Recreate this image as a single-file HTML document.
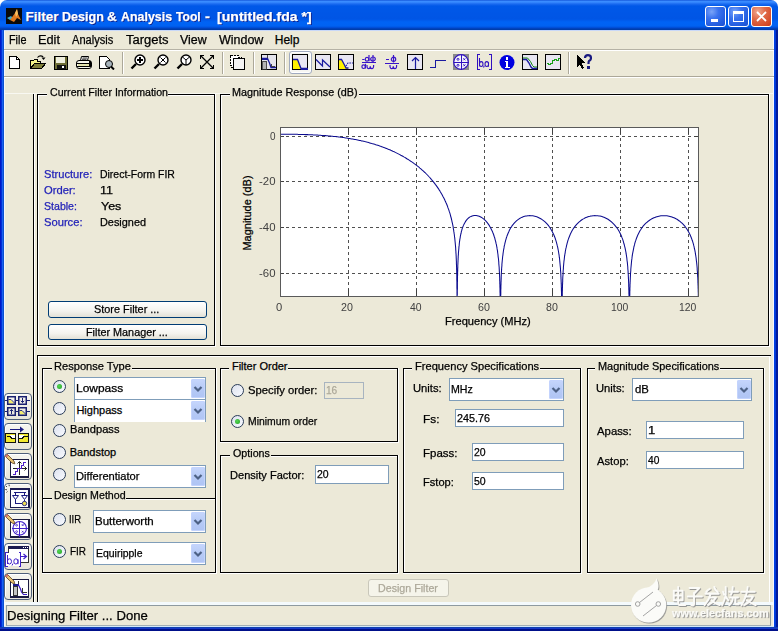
<!DOCTYPE html><html><head><meta charset="utf-8"><style>
html,body{margin:0;padding:0;width:778px;height:631px;overflow:hidden;background:#ECE9D8;position:relative}
body{font-family:"Liberation Sans",sans-serif}
.t{position:absolute;white-space:pre;-webkit-text-stroke:0.25px currentColor}
div{box-sizing:border-box}
</style></head><body>
<div style="position:absolute;left:0px;top:0px;width:778px;height:31px;background:#fff"></div>
<div style="position:absolute;left:0;top:0;width:778px;height:31px;border-radius:7px 7px 0 0;background:linear-gradient(to bottom,#0A48D0 0px,#3A8CFF 1px,#3A8CFF 2px,#1A6AF0 4px,#0058E8 6px,#0055E5 19px,#0063F5 22px,#0062F2 26px,#0048D0 28px,#003DAA 29px,#003DAA 30px,#C8D8F8 30px,#C8D8F8 31px)"></div>
<div style="position:absolute;left:0px;top:30px;width:1px;height:601px;background:#0018C8"></div>
<div style="position:absolute;left:1px;top:30px;width:1px;height:601px;background:#0030D8"></div>
<div style="position:absolute;left:2px;top:30px;width:1px;height:601px;background:#1A60F0"></div>
<div style="position:absolute;left:3px;top:30px;width:1px;height:601px;background:#0A50D0"></div>
<div style="position:absolute;left:4px;top:31px;width:1px;height:596px;background:#F0F4FF"></div>
<div style="position:absolute;left:773px;top:31px;width:1px;height:596px;background:#F4F6FF"></div>
<div style="position:absolute;left:774px;top:30px;width:1px;height:601px;background:#0040E0"></div>
<div style="position:absolute;left:775px;top:30px;width:1px;height:601px;background:#0038D8"></div>
<div style="position:absolute;left:776px;top:30px;width:2px;height:601px;background:#001A9A"></div>
<div style="position:absolute;left:0px;top:627px;width:778px;height:1px;background:#1040B0"></div>
<div style="position:absolute;left:0px;top:628px;width:778px;height:1px;background:#1838C8"></div>
<div style="position:absolute;left:0px;top:629px;width:778px;height:2px;background:#00108A"></div>
<div class="t" style="left:25.62px;top:10.46px;font-size:13.4px;line-height:13.4px;color:#fff;font-weight:bold;text-shadow:1px 1px 0 #0A1E8A">Filter</div>
<div class="t" style="left:61.78px;top:10.46px;font-size:13.4px;line-height:13.4px;color:#fff;font-weight:bold;transform:scaleX(0.9379);transform-origin:0 0;text-shadow:1px 1px 0 #0A1E8A">Design</div>
<div class="t" style="left:107.04px;top:10.46px;font-size:13.4px;line-height:13.4px;color:#fff;font-weight:bold;transform:scaleX(1.0075);transform-origin:0 0;text-shadow:1px 1px 0 #0A1E8A">&amp;</div>
<div class="t" style="left:120.71px;top:10.46px;font-size:13.4px;line-height:13.4px;color:#fff;font-weight:bold;transform:scaleX(0.9264);transform-origin:0 0;text-shadow:1px 1px 0 #0A1E8A">Analysis</div>
<div class="t" style="left:176.28px;top:10.46px;font-size:13.4px;line-height:13.4px;color:#fff;font-weight:bold;transform:scaleX(0.9036);transform-origin:0 0;text-shadow:1px 1px 0 #0A1E8A">Tool</div>
<div class="t" style="left:205.11px;top:10.46px;font-size:13.4px;line-height:13.4px;color:#fff;font-weight:bold;transform:scaleX(1.1048);transform-origin:0 0;text-shadow:1px 1px 0 #0A1E8A">-</div>
<div class="t" style="left:217.22px;top:10.46px;font-size:13.4px;line-height:13.4px;color:#fff;font-weight:bold;transform:scaleX(1.0522);transform-origin:0 0;text-shadow:1px 1px 0 #0A1E8A">[untitled.fda *]</div>
<div class="t" style="left:9.29px;top:33.84px;font-size:12px;line-height:12px;color:#000;transform:scaleX(0.9019);transform-origin:0 0;">File</div>
<div class="t" style="left:37.81px;top:33.84px;font-size:12px;line-height:12px;color:#000;transform:scaleX(1.0642);transform-origin:0 0;">Edit</div>
<div class="t" style="left:72.10px;top:33.84px;font-size:12px;line-height:12px;color:#000;transform:scaleX(0.9221);transform-origin:0 0;">Analysis</div>
<div class="t" style="left:125.55px;top:33.84px;font-size:12px;line-height:12px;color:#000;transform:scaleX(1.0831);transform-origin:0 0;">Targets</div>
<div class="t" style="left:180.06px;top:33.84px;font-size:12px;line-height:12px;color:#000;transform:scaleX(1.0313);transform-origin:0 0;">View</div>
<div class="t" style="left:219.21px;top:33.84px;font-size:12px;line-height:12px;color:#000;transform:scaleX(1.0394);transform-origin:0 0;">Window</div>
<div class="t" style="left:274.79px;top:33.84px;font-size:12px;line-height:12px;color:#000;">Help</div>
<div style="position:absolute;left:4px;top:49px;width:770px;height:1px;background:#B5B2A5"></div>
<div style="position:absolute;left:4px;top:50px;width:770px;height:1px;background:#fff"></div>
<div style="position:absolute;left:4px;top:76px;width:770px;height:1px;background:#ACA899"></div>
<div style="position:absolute;left:4px;top:77px;width:770px;height:1px;background:#fff"></div>
<div style="position:absolute;left:122px;top:52px;width:1px;height:22px;background:#ACA899"></div>
<div style="position:absolute;left:123px;top:52px;width:1px;height:22px;background:#fff"></div>
<div style="position:absolute;left:222px;top:52px;width:1px;height:22px;background:#ACA899"></div>
<div style="position:absolute;left:223px;top:52px;width:1px;height:22px;background:#fff"></div>
<div style="position:absolute;left:253px;top:52px;width:1px;height:22px;background:#ACA899"></div>
<div style="position:absolute;left:254px;top:52px;width:1px;height:22px;background:#fff"></div>
<div style="position:absolute;left:284px;top:52px;width:1px;height:22px;background:#ACA899"></div>
<div style="position:absolute;left:285px;top:52px;width:1px;height:22px;background:#fff"></div>
<div style="position:absolute;left:568px;top:52px;width:1px;height:22px;background:#ACA899"></div>
<div style="position:absolute;left:569px;top:52px;width:1px;height:22px;background:#fff"></div>
<div style="position:absolute;left:33px;top:94px;width:1px;height:509px;background:#000"></div>
<div style="position:absolute;left:34px;top:94px;width:1px;height:509px;background:#fff"></div>
<div style="position:absolute;left:4px;top:93px;width:770px;height:1px;background:#F8F8F2"></div>
<div style="position:absolute;left:37px;top:94px;width:178px;height:1px;background:#000"></div>
<div style="position:absolute;left:37px;top:345px;width:178px;height:1px;background:#000"></div>
<div style="position:absolute;left:37px;top:94px;width:1px;height:252px;background:#000"></div>
<div style="position:absolute;left:214px;top:94px;width:1px;height:252px;background:#000"></div>
<div style="position:absolute;left:38px;top:95px;width:176px;height:1px;background:#fff"></div>
<div style="position:absolute;left:38px;top:95px;width:1px;height:250px;background:#fff"></div>
<div style="position:absolute;left:37px;top:346px;width:179px;height:1px;background:#fff"></div>
<div style="position:absolute;left:215px;top:94px;width:1px;height:253px;background:#fff"></div>
<div style="position:absolute;left:46.7px;top:87px;width:121.8px;height:10px;background:#ECE9D8"></div>
<div class="t" style="left:50.09px;top:87.19px;font-size:11px;line-height:11px;color:#000;transform:scaleX(0.9651);transform-origin:0 0;">Current Filter Information</div>
<div style="position:absolute;left:220px;top:94px;width:549px;height:1px;background:#000"></div>
<div style="position:absolute;left:220px;top:345px;width:549px;height:1px;background:#000"></div>
<div style="position:absolute;left:220px;top:94px;width:1px;height:252px;background:#000"></div>
<div style="position:absolute;left:768px;top:94px;width:1px;height:252px;background:#000"></div>
<div style="position:absolute;left:221px;top:95px;width:547px;height:1px;background:#fff"></div>
<div style="position:absolute;left:221px;top:95px;width:1px;height:250px;background:#fff"></div>
<div style="position:absolute;left:220px;top:346px;width:550px;height:1px;background:#fff"></div>
<div style="position:absolute;left:769px;top:94px;width:1px;height:253px;background:#fff"></div>
<div style="position:absolute;left:229.5px;top:87px;width:129px;height:10px;background:#ECE9D8"></div>
<div class="t" style="left:232.41px;top:86.99px;font-size:11px;line-height:11px;color:#000;transform:scaleX(0.9825);transform-origin:0 0;">Magnitude Response (dB)</div>
<div style="position:absolute;left:37px;top:355px;width:734px;height:1px;background:#000"></div>
<div style="position:absolute;left:38px;top:356px;width:732px;height:1px;background:#fff"></div>
<div style="position:absolute;left:37px;top:355px;width:1px;height:249px;background:#000"></div>
<div style="position:absolute;left:38px;top:356px;width:1px;height:248px;background:#fff"></div>
<div style="position:absolute;left:769px;top:356px;width:1px;height:248px;background:#fff"></div>
<div style="position:absolute;left:42px;top:368px;width:174px;height:1px;background:#000"></div>
<div style="position:absolute;left:42px;top:498px;width:174px;height:1px;background:#000"></div>
<div style="position:absolute;left:42px;top:368px;width:1px;height:131px;background:#000"></div>
<div style="position:absolute;left:215px;top:368px;width:1px;height:131px;background:#000"></div>
<div style="position:absolute;left:43px;top:369px;width:172px;height:1px;background:#fff"></div>
<div style="position:absolute;left:43px;top:369px;width:1px;height:129px;background:#fff"></div>
<div style="position:absolute;left:42px;top:499px;width:175px;height:1px;background:#fff"></div>
<div style="position:absolute;left:216px;top:368px;width:1px;height:132px;background:#fff"></div>
<div style="position:absolute;left:51.5px;top:361px;width:80.2px;height:10px;background:#ECE9D8"></div>
<div class="t" style="left:54.40px;top:361.29px;font-size:11px;line-height:11px;color:#000;transform:scaleX(1.0088);transform-origin:0 0;">Response Type</div>
<div style="position:absolute;left:42px;top:498px;width:174px;height:1px;background:#000"></div>
<div style="position:absolute;left:42px;top:572px;width:174px;height:1px;background:#000"></div>
<div style="position:absolute;left:42px;top:498px;width:1px;height:75px;background:#000"></div>
<div style="position:absolute;left:215px;top:498px;width:1px;height:75px;background:#000"></div>
<div style="position:absolute;left:43px;top:499px;width:172px;height:1px;background:#fff"></div>
<div style="position:absolute;left:43px;top:499px;width:1px;height:73px;background:#fff"></div>
<div style="position:absolute;left:42px;top:573px;width:175px;height:1px;background:#fff"></div>
<div style="position:absolute;left:216px;top:498px;width:1px;height:76px;background:#fff"></div>
<div style="position:absolute;left:51.5px;top:491px;width:74.8px;height:10px;background:#ECE9D8"></div>
<div class="t" style="left:54.40px;top:489.79px;font-size:11px;line-height:11px;color:#000;transform:scaleX(0.9678);transform-origin:0 0;">Design Method</div>
<div style="position:absolute;left:220px;top:368px;width:178px;height:1px;background:#000"></div>
<div style="position:absolute;left:220px;top:441px;width:178px;height:1px;background:#000"></div>
<div style="position:absolute;left:220px;top:368px;width:1px;height:74px;background:#000"></div>
<div style="position:absolute;left:397px;top:368px;width:1px;height:74px;background:#000"></div>
<div style="position:absolute;left:221px;top:369px;width:176px;height:1px;background:#fff"></div>
<div style="position:absolute;left:221px;top:369px;width:1px;height:72px;background:#fff"></div>
<div style="position:absolute;left:220px;top:442px;width:179px;height:1px;background:#fff"></div>
<div style="position:absolute;left:398px;top:368px;width:1px;height:75px;background:#fff"></div>
<div style="position:absolute;left:229px;top:361px;width:59.3px;height:10px;background:#ECE9D8"></div>
<div class="t" style="left:231.91px;top:361.29px;font-size:11px;line-height:11px;color:#000;">Filter Order</div>
<div style="position:absolute;left:220px;top:455px;width:178px;height:1px;background:#000"></div>
<div style="position:absolute;left:220px;top:572px;width:178px;height:1px;background:#000"></div>
<div style="position:absolute;left:220px;top:455px;width:1px;height:118px;background:#000"></div>
<div style="position:absolute;left:397px;top:455px;width:1px;height:118px;background:#000"></div>
<div style="position:absolute;left:221px;top:456px;width:176px;height:1px;background:#fff"></div>
<div style="position:absolute;left:221px;top:456px;width:1px;height:116px;background:#fff"></div>
<div style="position:absolute;left:220px;top:573px;width:179px;height:1px;background:#fff"></div>
<div style="position:absolute;left:398px;top:455px;width:1px;height:119px;background:#fff"></div>
<div style="position:absolute;left:229.6px;top:448px;width:41px;height:10px;background:#ECE9D8"></div>
<div class="t" style="left:233.04px;top:448.29px;font-size:11px;line-height:11px;color:#000;transform:scaleX(0.9729);transform-origin:0 0;">Options</div>
<div style="position:absolute;left:403px;top:368px;width:178px;height:1px;background:#000"></div>
<div style="position:absolute;left:403px;top:572px;width:178px;height:1px;background:#000"></div>
<div style="position:absolute;left:403px;top:368px;width:1px;height:205px;background:#000"></div>
<div style="position:absolute;left:580px;top:368px;width:1px;height:205px;background:#000"></div>
<div style="position:absolute;left:404px;top:369px;width:176px;height:1px;background:#fff"></div>
<div style="position:absolute;left:404px;top:369px;width:1px;height:203px;background:#fff"></div>
<div style="position:absolute;left:403px;top:573px;width:179px;height:1px;background:#fff"></div>
<div style="position:absolute;left:581px;top:368px;width:1px;height:206px;background:#fff"></div>
<div style="position:absolute;left:412px;top:361px;width:127.7px;height:10px;background:#ECE9D8"></div>
<div class="t" style="left:414.90px;top:361.29px;font-size:11px;line-height:11px;color:#000;transform:scaleX(1.0099);transform-origin:0 0;">Frequency Specifications</div>
<div style="position:absolute;left:587px;top:368px;width:177px;height:1px;background:#000"></div>
<div style="position:absolute;left:587px;top:572px;width:177px;height:1px;background:#000"></div>
<div style="position:absolute;left:587px;top:368px;width:1px;height:205px;background:#000"></div>
<div style="position:absolute;left:763px;top:368px;width:1px;height:205px;background:#000"></div>
<div style="position:absolute;left:588px;top:369px;width:175px;height:1px;background:#fff"></div>
<div style="position:absolute;left:588px;top:369px;width:1px;height:203px;background:#fff"></div>
<div style="position:absolute;left:587px;top:573px;width:178px;height:1px;background:#fff"></div>
<div style="position:absolute;left:764px;top:368px;width:1px;height:206px;background:#fff"></div>
<div style="position:absolute;left:595.1px;top:361px;width:124.6px;height:10px;background:#ECE9D8"></div>
<div class="t" style="left:598.00px;top:361.29px;font-size:11px;line-height:11px;color:#000;transform:scaleX(0.9918);transform-origin:0 0;">Magnitude Specifications</div>
<div class="t" style="left:43.95px;top:168.59px;font-size:11px;line-height:11px;color:#2323B8;transform:scaleX(1.0130);transform-origin:0 0;">Structure:</div>
<div class="t" style="left:100.42px;top:168.59px;font-size:11px;line-height:11px;color:#000;transform:scaleX(0.9505);transform-origin:0 0;">Direct-Form FIR</div>
<div class="t" style="left:44.11px;top:185.09px;font-size:11px;line-height:11px;color:#2323B8;transform:scaleX(1.0175);transform-origin:0 0;">Order:</div>
<div class="t" style="left:100.03px;top:185.09px;font-size:11px;line-height:11px;color:#000;transform:scaleX(1.1440);transform-origin:0 0;">11</div>
<div class="t" style="left:43.99px;top:200.89px;font-size:11px;line-height:11px;color:#2323B8;transform:scaleX(0.9616);transform-origin:0 0;">Stable:</div>
<div class="t" style="left:100.85px;top:200.89px;font-size:11px;line-height:11px;color:#000;transform:scaleX(1.1345);transform-origin:0 0;">Yes</div>
<div class="t" style="left:43.95px;top:216.99px;font-size:11px;line-height:11px;color:#2323B8;transform:scaleX(1.0166);transform-origin:0 0;">Source:</div>
<div class="t" style="left:100.38px;top:216.99px;font-size:11px;line-height:11px;color:#000;transform:scaleX(0.9898);transform-origin:0 0;">Designed</div>
<div style="position:absolute;left:48px;top:301px;width:159px;height:17px;border:1px solid #003C74;border-radius:3px;background:linear-gradient(to bottom,#FFFFFF 0%,#F4F3EE 60%,#E3E1D6 100%)"></div>
<div class="t" style="left:94.37px;top:303.69px;font-size:11px;line-height:11px;color:#000;transform:scaleX(0.9901);transform-origin:0 0;">Store Filter ...</div>
<div style="position:absolute;left:48px;top:324px;width:159px;height:16px;border:1px solid #003C74;border-radius:3px;background:linear-gradient(to bottom,#FFFFFF 0%,#F4F3EE 60%,#E3E1D6 100%)"></div>
<div class="t" style="left:86.43px;top:326.69px;font-size:11px;line-height:11px;color:#000;transform:scaleX(0.9842);transform-origin:0 0;">Filter Manager ...</div>
<div style="position:absolute;left:368px;top:579px;width:81px;height:18px;border:1px solid #C9C7BA;border-radius:3px;background:#F5F4EA"></div>
<div class="t" style="left:378.20px;top:583.19px;font-size:11px;line-height:11px;color:#ACA899;transform:scaleX(0.9702);transform-origin:0 0;">Design Filter</div>
<div style="position:absolute;left:74px;top:377px;width:132px;height:23px;border:1px solid #7F9DB9;background:#fff"></div>
<div style="position:absolute;left:191px;top:379px;width:14px;height:19px;border-radius:2px;background:linear-gradient(to bottom,#C6D6FC 0%,#B6CAF6 50%,#AFC4F4 100%);box-shadow:inset 0 0 0 1px #C3D3FD"></div>
<svg style="position:absolute;left:193px;top:384.5px" width="10" height="8"><path d="M1.5,2 L5,5.5 L8.5,2" fill="none" stroke="#4D6185" stroke-width="2.2"/></svg>
<div class="t" style="left:76.27px;top:383.19px;font-size:11px;line-height:11px;color:#000;transform:scaleX(1.0868);transform-origin:0 0;">Lowpass</div>
<div style="position:absolute;left:74px;top:399px;width:132px;height:23px;border:1px solid #7F9DB9;border-bottom:none;background:#fff"></div>
<div style="position:absolute;left:191px;top:401px;width:14px;height:19px;border-radius:2px;background:linear-gradient(to bottom,#C6D6FC 0%,#B6CAF6 50%,#AFC4F4 100%);box-shadow:inset 0 0 0 1px #C3D3FD"></div>
<svg style="position:absolute;left:193px;top:406.5px" width="10" height="8"><path d="M1.5,2 L5,5.5 L8.5,2" fill="none" stroke="#4D6185" stroke-width="2.2"/></svg>
<div class="t" style="left:76.41px;top:404.79px;font-size:11px;line-height:11px;color:#000;">Highpass</div>
<div style="position:absolute;left:74px;top:465px;width:132px;height:23px;border:1px solid #7F9DB9;background:#fff"></div>
<div style="position:absolute;left:191px;top:467px;width:14px;height:19px;border-radius:2px;background:linear-gradient(to bottom,#C6D6FC 0%,#B6CAF6 50%,#AFC4F4 100%);box-shadow:inset 0 0 0 1px #C3D3FD"></div>
<svg style="position:absolute;left:193px;top:472.5px" width="10" height="8"><path d="M1.5,2 L5,5.5 L8.5,2" fill="none" stroke="#4D6185" stroke-width="2.2"/></svg>
<div class="t" style="left:76.35px;top:470.89px;font-size:11px;line-height:11px;color:#000;transform:scaleX(1.0115);transform-origin:0 0;">Differentiator</div>
<div style="position:absolute;left:93px;top:510px;width:113px;height:23px;border:1px solid #7F9DB9;background:#fff"></div>
<div style="position:absolute;left:191px;top:512px;width:14px;height:19px;border-radius:2px;background:linear-gradient(to bottom,#C6D6FC 0%,#B6CAF6 50%,#AFC4F4 100%);box-shadow:inset 0 0 0 1px #C3D3FD"></div>
<svg style="position:absolute;left:193px;top:517.5px" width="10" height="8"><path d="M1.5,2 L5,5.5 L8.5,2" fill="none" stroke="#4D6185" stroke-width="2.2"/></svg>
<div class="t" style="left:95.46px;top:515.89px;font-size:11px;line-height:11px;color:#000;transform:scaleX(1.0446);transform-origin:0 0;">Butterworth</div>
<div style="position:absolute;left:93px;top:542px;width:113px;height:23px;border:1px solid #7F9DB9;background:#fff"></div>
<div style="position:absolute;left:191px;top:544px;width:14px;height:19px;border-radius:2px;background:linear-gradient(to bottom,#C6D6FC 0%,#B6CAF6 50%,#AFC4F4 100%);box-shadow:inset 0 0 0 1px #C3D3FD"></div>
<svg style="position:absolute;left:193px;top:549.5px" width="10" height="8"><path d="M1.5,2 L5,5.5 L8.5,2" fill="none" stroke="#4D6185" stroke-width="2.2"/></svg>
<div class="t" style="left:95.56px;top:547.99px;font-size:11px;line-height:11px;color:#000;transform:scaleX(0.9507);transform-origin:0 0;">Equiripple</div>
<div style="position:absolute;left:449px;top:378px;width:115px;height:23px;border:1px solid #7F9DB9;background:#fff"></div>
<div style="position:absolute;left:549px;top:380px;width:14px;height:19px;border-radius:2px;background:linear-gradient(to bottom,#C6D6FC 0%,#B6CAF6 50%,#AFC4F4 100%);box-shadow:inset 0 0 0 1px #C3D3FD"></div>
<svg style="position:absolute;left:551px;top:385.5px" width="10" height="8"><path d="M1.5,2 L5,5.5 L8.5,2" fill="none" stroke="#4D6185" stroke-width="2.2"/></svg>
<div class="t" style="left:451.23px;top:383.89px;font-size:11px;line-height:11px;color:#000;transform:scaleX(0.9652);transform-origin:0 0;">MHz</div>
<div style="position:absolute;left:632px;top:378px;width:120px;height:23px;border:1px solid #7F9DB9;background:#fff"></div>
<div style="position:absolute;left:737px;top:380px;width:14px;height:19px;border-radius:2px;background:linear-gradient(to bottom,#C6D6FC 0%,#B6CAF6 50%,#AFC4F4 100%);box-shadow:inset 0 0 0 1px #C3D3FD"></div>
<svg style="position:absolute;left:739px;top:385.5px" width="10" height="8"><path d="M1.5,2 L5,5.5 L8.5,2" fill="none" stroke="#4D6185" stroke-width="2.2"/></svg>
<div class="t" style="left:634.50px;top:383.99px;font-size:11px;line-height:11px;color:#000;transform:scaleX(1.0322);transform-origin:0 0;">dB</div>
<div style="position:absolute;left:53.0px;top:380.0px;width:13px;height:13px;border-radius:50%;border:1px solid #2A3C58;background:linear-gradient(135deg,#DDE2EE 0%,#F8FAFF 100%)"></div>
<div style="position:absolute;left:57.0px;top:384.0px;width:5px;height:5px;border-radius:50%;background:radial-gradient(circle at 40% 40%,#55D655,#21A121)"></div>
<div style="position:absolute;left:53.0px;top:402.0px;width:13px;height:13px;border-radius:50%;border:1px solid #2A3C58;background:linear-gradient(135deg,#DDE2EE 0%,#F8FAFF 100%)"></div>
<div style="position:absolute;left:53.0px;top:424.0px;width:13px;height:13px;border-radius:50%;border:1px solid #2A3C58;background:linear-gradient(135deg,#DDE2EE 0%,#F8FAFF 100%)"></div>
<div class="t" style="left:69.70px;top:424.39px;font-size:11px;line-height:11px;color:#000;transform:scaleX(1.0107);transform-origin:0 0;">Bandpass</div>
<div style="position:absolute;left:53.0px;top:446.0px;width:13px;height:13px;border-radius:50%;border:1px solid #2A3C58;background:linear-gradient(135deg,#DDE2EE 0%,#F8FAFF 100%)"></div>
<div class="t" style="left:69.71px;top:446.89px;font-size:11px;line-height:11px;color:#000;">Bandstop</div>
<div style="position:absolute;left:53.0px;top:468.0px;width:13px;height:13px;border-radius:50%;border:1px solid #2A3C58;background:linear-gradient(135deg,#DDE2EE 0%,#F8FAFF 100%)"></div>
<div style="position:absolute;left:53.0px;top:513.0px;width:13px;height:13px;border-radius:50%;border:1px solid #2A3C58;background:linear-gradient(135deg,#DDE2EE 0%,#F8FAFF 100%)"></div>
<div class="t" style="left:69.43px;top:513.89px;font-size:11px;line-height:11px;color:#000;transform:scaleX(0.8583);transform-origin:0 0;">IIR</div>
<div style="position:absolute;left:53.0px;top:545.0px;width:13px;height:13px;border-radius:50%;border:1px solid #2A3C58;background:linear-gradient(135deg,#DDE2EE 0%,#F8FAFF 100%)"></div>
<div style="position:absolute;left:57.0px;top:549.0px;width:5px;height:5px;border-radius:50%;background:radial-gradient(circle at 40% 40%,#55D655,#21A121)"></div>
<div class="t" style="left:69.51px;top:545.69px;font-size:11px;line-height:11px;color:#000;transform:scaleX(0.9057);transform-origin:0 0;">FIR</div>
<div style="position:absolute;left:230.8px;top:384.0px;width:13px;height:13px;border-radius:50%;border:1px solid #2A3C58;background:linear-gradient(135deg,#DDE2EE 0%,#F8FAFF 100%)"></div>
<div class="t" style="left:248.05px;top:384.99px;font-size:11px;line-height:11px;color:#000;transform:scaleX(1.0227);transform-origin:0 0;">Specify order:</div>
<div style="position:absolute;left:230.8px;top:415.0px;width:13px;height:13px;border-radius:50%;border:1px solid #2A3C58;background:linear-gradient(135deg,#DDE2EE 0%,#F8FAFF 100%)"></div>
<div style="position:absolute;left:234.8px;top:419.0px;width:5px;height:5px;border-radius:50%;background:radial-gradient(circle at 40% 40%,#55D655,#21A121)"></div>
<div class="t" style="left:247.75px;top:415.89px;font-size:11px;line-height:11px;color:#000;transform:scaleX(0.9426);transform-origin:0 0;">Minimum order</div>
<div style="position:absolute;left:324px;top:382px;width:40px;height:17px;border:1px solid #A8B4C0;background:#ECE9D8"></div>
<div class="t" style="left:326.12px;top:384.99px;font-size:11px;line-height:11px;color:#ACA899;transform:scaleX(0.9194);transform-origin:0 0;">16</div>
<div class="t" style="left:230.36px;top:470.29px;font-size:11px;line-height:11px;color:#000;transform:scaleX(1.0051);transform-origin:0 0;">Density Factor:</div>
<div style="position:absolute;left:315px;top:465px;width:74px;height:19px;border:1px solid #7F9DB9;background:#fff"></div>
<div class="t" style="left:316.73px;top:469.19px;font-size:11px;line-height:11px;color:#000;transform:scaleX(0.9508);transform-origin:0 0;">20</div>
<div class="t" style="left:413.13px;top:382.99px;font-size:11px;line-height:11px;color:#000;transform:scaleX(1.0189);transform-origin:0 0;">Units:</div>
<div class="t" style="left:423.33px;top:413.89px;font-size:11px;line-height:11px;color:#000;transform:scaleX(1.0750);transform-origin:0 0;">Fs:</div>
<div style="position:absolute;left:455px;top:409px;width:109px;height:18px;border:1px solid #7F9DB9;background:#fff"></div>
<div class="t" style="left:456.91px;top:412.89px;font-size:11px;line-height:11px;color:#000;transform:scaleX(0.9802);transform-origin:0 0;">245.76</div>
<div class="t" style="left:423.36px;top:447.89px;font-size:11px;line-height:11px;color:#000;transform:scaleX(1.0431);transform-origin:0 0;">Fpass:</div>
<div style="position:absolute;left:472px;top:443px;width:92px;height:18px;border:1px solid #7F9DB9;background:#fff"></div>
<div class="t" style="left:473.83px;top:447.19px;font-size:11px;line-height:11px;color:#000;transform:scaleX(0.9508);transform-origin:0 0;">20</div>
<div class="t" style="left:423.40px;top:476.79px;font-size:11px;line-height:11px;color:#000;transform:scaleX(1.0068);transform-origin:0 0;">Fstop:</div>
<div style="position:absolute;left:472px;top:472px;width:92px;height:18px;border:1px solid #7F9DB9;background:#fff"></div>
<div class="t" style="left:473.76px;top:476.09px;font-size:11px;line-height:11px;color:#000;transform:scaleX(0.9566);transform-origin:0 0;">50</div>
<div class="t" style="left:596.23px;top:382.99px;font-size:11px;line-height:11px;color:#000;transform:scaleX(1.0189);transform-origin:0 0;">Units:</div>
<div class="t" style="left:597.16px;top:425.99px;font-size:11px;line-height:11px;color:#000;transform:scaleX(1.0319);transform-origin:0 0;">Apass:</div>
<div style="position:absolute;left:646px;top:421px;width:98px;height:18px;border:1px solid #7F9DB9;background:#fff"></div>
<div class="t" style="left:647.87px;top:425.49px;font-size:11px;line-height:11px;color:#000;transform:scaleX(1.1916);transform-origin:0 0;">1</div>
<div class="t" style="left:597.17px;top:456.39px;font-size:11px;line-height:11px;color:#000;transform:scaleX(1.0177);transform-origin:0 0;">Astop:</div>
<div style="position:absolute;left:646px;top:451px;width:98px;height:18px;border:1px solid #7F9DB9;background:#fff"></div>
<div class="t" style="left:648.40px;top:455.29px;font-size:11px;line-height:11px;color:#000;transform:scaleX(0.9278);transform-origin:0 0;">40</div>
<div style="position:absolute;left:4px;top:602px;width:770px;height:3px;background:#F4FAFD"></div>
<div style="position:absolute;left:6px;top:605px;width:765px;height:21px;border:1px solid #8E9AA0;border-bottom-color:#A2AEB4;background:#ECE9D8"></div>
<div style="position:absolute;left:4px;top:626px;width:770px;height:1px;background:#D4E8F8"></div>
<div class="t" style="left:7.40px;top:609.20px;font-size:13px;line-height:13px;color:#000;transform:scaleX(1.0096);transform-origin:0 0;">Designing Filter ... Done</div>
<svg style="position:absolute;left:0;top:0" width="778" height="631"><rect x="280" y="127" width="418" height="169" fill="#fff"/><path d="M348.5,127 L348.5,296" stroke="#505050" stroke-width="1" stroke-dasharray="3,3" stroke-dashoffset="1" shape-rendering="crispEdges"/><path d="M416.5,127 L416.5,296" stroke="#505050" stroke-width="1" stroke-dasharray="3,3" stroke-dashoffset="1" shape-rendering="crispEdges"/><path d="M484.5,127 L484.5,296" stroke="#505050" stroke-width="1" stroke-dasharray="3,3" stroke-dashoffset="1" shape-rendering="crispEdges"/><path d="M552.5,127 L552.5,296" stroke="#505050" stroke-width="1" stroke-dasharray="3,3" stroke-dashoffset="1" shape-rendering="crispEdges"/><path d="M620.5,127 L620.5,296" stroke="#505050" stroke-width="1" stroke-dasharray="3,3" stroke-dashoffset="1" shape-rendering="crispEdges"/><path d="M688.5,127 L688.5,296" stroke="#505050" stroke-width="1" stroke-dasharray="3,3" stroke-dashoffset="1" shape-rendering="crispEdges"/><path d="M280,136.5 L698,136.5" stroke="#505050" stroke-width="1" stroke-dasharray="3,3" shape-rendering="crispEdges"/><path d="M280,181.5 L698,181.5" stroke="#505050" stroke-width="1" stroke-dasharray="3,3" shape-rendering="crispEdges"/><path d="M280,227.5 L698,227.5" stroke="#505050" stroke-width="1" stroke-dasharray="3,3" shape-rendering="crispEdges"/><path d="M280,273.5 L698,273.5" stroke="#505050" stroke-width="1" stroke-dasharray="3,3" shape-rendering="crispEdges"/><path d="M280.5,296 L280.5,289 M280.5,127 L280.5,134" stroke="#404040" stroke-width="1" shape-rendering="crispEdges"/><path d="M348.5,296 L348.5,289 M348.5,127 L348.5,134" stroke="#404040" stroke-width="1" shape-rendering="crispEdges"/><path d="M416.5,296 L416.5,289 M416.5,127 L416.5,134" stroke="#404040" stroke-width="1" shape-rendering="crispEdges"/><path d="M484.5,296 L484.5,289 M484.5,127 L484.5,134" stroke="#404040" stroke-width="1" shape-rendering="crispEdges"/><path d="M552.5,296 L552.5,289 M552.5,127 L552.5,134" stroke="#404040" stroke-width="1" shape-rendering="crispEdges"/><path d="M620.5,296 L620.5,289 M620.5,127 L620.5,134" stroke="#404040" stroke-width="1" shape-rendering="crispEdges"/><path d="M688.5,296 L688.5,289 M688.5,127 L688.5,134" stroke="#404040" stroke-width="1" shape-rendering="crispEdges"/><path d="M280,136.5 L284,136.5 M698,136.5 L694,136.5" stroke="#404040" stroke-width="1" shape-rendering="crispEdges"/><path d="M280,181.5 L284,181.5 M698,181.5 L694,181.5" stroke="#404040" stroke-width="1" shape-rendering="crispEdges"/><path d="M280,227.5 L284,227.5 M698,227.5 L694,227.5" stroke="#404040" stroke-width="1" shape-rendering="crispEdges"/><path d="M280,273.5 L284,273.5 M698,273.5 L694,273.5" stroke="#404040" stroke-width="1" shape-rendering="crispEdges"/><path d="M280.3,134.2 L281.3,134.2 L282.3,134.2 L283.3,134.2 L284.3,134.2 L285.3,134.2 L286.3,134.2 L287.3,134.2 L288.3,134.2 L289.3,134.2 L290.3,134.2 L291.3,134.2 L292.4,134.3 L293.4,134.3 L294.4,134.3 L295.4,134.3 L296.4,134.3 L297.4,134.3 L298.4,134.4 L299.4,134.4 L300.4,134.4 L301.4,134.4 L302.4,134.5 L303.4,134.5 L304.4,134.5 L305.4,134.6 L306.4,134.6 L307.4,134.6 L308.4,134.7 L309.4,134.7 L310.4,134.8 L311.4,134.8 L312.4,134.8 L313.4,134.9 L314.4,134.9 L315.4,135.0 L316.5,135.0 L317.5,135.1 L318.5,135.2 L319.5,135.2 L320.5,135.3 L321.5,135.4 L322.5,135.4 L323.5,135.5 L324.5,135.6 L325.5,135.6 L326.5,135.7 L327.5,135.8 L328.5,135.9 L329.5,136.0 L330.5,136.1 L331.5,136.2 L332.5,136.3 L333.5,136.4 L334.5,136.5 L335.5,136.6 L336.5,136.7 L337.5,136.8 L338.5,136.9 L339.5,137.1 L340.6,137.2 L341.6,137.3 L342.6,137.5 L343.6,137.6 L344.6,137.7 L345.6,137.9 L346.6,138.0 L347.6,138.2 L348.6,138.4 L349.6,138.5 L350.6,138.7 L351.6,138.9 L352.6,139.0 L353.6,139.2 L354.6,139.4 L355.6,139.6 L356.6,139.8 L357.6,140.0 L358.6,140.2 L359.6,140.4 L360.6,140.6 L361.6,140.9 L362.6,141.1 L363.6,141.3 L364.7,141.6 L365.7,141.8 L366.7,142.1 L367.7,142.3 L368.7,142.6 L369.7,142.9 L370.7,143.2 L371.7,143.5 L372.7,143.7 L373.7,144.0 L374.7,144.3 L375.7,144.7 L376.7,145.0 L377.7,145.3 L378.7,145.6 L379.7,146.0 L380.7,146.3 L381.7,146.7 L382.7,147.1 L383.7,147.4 L384.7,147.8 L385.7,148.2 L386.7,148.6 L387.7,149.0 L388.8,149.4 L389.8,149.8 L390.8,150.3 L391.8,150.7 L392.8,151.2 L393.8,151.6 L394.8,152.1 L395.8,152.6 L396.8,153.1 L397.8,153.6 L398.8,154.1 L399.8,154.6 L400.8,155.2 L401.8,155.7 L402.8,156.3 L403.8,156.9 L404.8,157.4 L405.8,158.0 L406.8,158.7 L407.8,159.3 L408.8,159.9 L409.8,160.6 L410.8,161.3 L411.8,161.9 L412.9,162.6 L413.9,163.4 L414.9,164.1 L415.9,164.9 L416.9,165.6 L417.9,166.4 L418.9,167.2 L419.9,168.1 L420.9,168.9 L421.9,169.8 L422.9,170.7 L423.9,171.6 L424.9,172.5 L425.9,173.5 L426.9,174.5 L427.9,175.5 L428.8,176.5 L429.8,177.5 L430.7,178.6 L431.5,179.6 L432.4,180.6 L433.2,181.6 L434.0,182.6 L434.8,183.6 L435.5,184.6 L436.3,185.6 L437.0,186.6 L437.7,187.6 L438.4,188.6 L439.0,189.6 L439.7,190.6 L440.3,191.7 L440.9,192.7 L441.5,193.7 L442.1,194.7 L442.6,195.7 L443.1,196.7 L443.7,197.7 L444.2,198.7 L444.7,199.8 L445.1,200.8 L445.6,201.8 L446.0,202.8 L446.5,203.8 L446.9,204.8 L447.3,205.8 L447.7,206.8 L448.0,207.9 L448.4,208.9 L448.8,209.9 L449.1,210.9 L449.4,211.9 L449.8,212.9 L450.1,213.9 L450.4,215.0 L450.6,216.0 L450.9,217.0 L451.2,218.0 L451.4,219.0 L451.7,220.0 L451.9,221.1 L452.1,222.1 L452.4,223.1 L452.6,224.2 L452.8,225.2 L453.0,226.2 L453.2,227.2 L453.3,228.3 L453.5,229.3 L453.7,230.4 L453.8,231.4 L454.0,232.4 L454.1,233.5 L454.3,234.5 L454.4,235.5 L454.5,236.5 L454.7,237.6 L454.8,238.6 L454.9,239.7 L455.0,240.7 L455.1,241.7 L455.2,242.8 L455.3,243.9 L455.4,245.0 L455.5,246.0 L455.6,247.1 L455.7,248.2 L455.7,249.3 L455.8,250.4 L455.9,251.5 L455.9,252.5 L456.0,253.6 L456.1,254.8 L456.1,255.8 L456.2,256.8 L456.2,258.0 L456.3,259.1 L456.3,260.4 L456.4,261.4 L456.4,262.5 L456.4,263.7 L456.5,264.9 L456.5,266.3 L456.6,267.3 L456.6,268.4 L456.6,269.6 L456.7,270.8 L456.7,272.1 L456.7,273.5 L456.8,275.0 L456.8,276.1 L456.8,277.2 L456.8,278.4 L456.8,279.7 L456.9,281.1 L456.9,282.5 L456.9,284.1 L456.9,285.8 L456.9,287.7 L457.0,289.7 L457.0,290.8 L457.0,292.0 L457.0,293.2 L457.0,294.5 L457.0,296.0 L457.0,296.0 L457.3,294.9 L457.3,293.5 L457.3,292.3 L457.3,291.1 L457.3,290.1 L457.4,289.0 L457.4,287.1 L457.4,285.3 L457.4,283.7 L457.4,282.2 L457.5,280.9 L457.5,279.6 L457.5,278.4 L457.5,277.2 L457.5,276.1 L457.6,275.1 L457.6,273.7 L457.6,272.4 L457.7,271.1 L457.7,270.0 L457.7,268.8 L457.8,267.8 L457.8,266.5 L457.8,265.3 L457.9,264.1 L457.9,263.0 L458.0,262.0 L458.0,260.8 L458.1,259.7 L458.1,258.6 L458.2,257.6 L458.2,256.5 L458.3,255.4 L458.4,254.4 L458.4,253.3 L458.5,252.2 L458.6,251.1 L458.7,250.0 L458.8,249.0 L458.9,248.0 L458.9,247.0 L459.1,245.9 L459.2,244.8 L459.3,243.8 L459.4,242.8 L459.5,241.7 L459.7,240.6 L459.8,239.6 L460.0,238.6 L460.2,237.6 L460.3,236.6 L460.5,235.6 L460.7,234.5 L461.0,233.5 L461.2,232.5 L461.4,231.5 L461.7,230.5 L462.0,229.4 L462.3,228.4 L462.7,227.4 L463.0,226.4 L463.5,225.4 L463.9,224.4 L464.4,223.4 L465.0,222.4 L465.6,221.4 L466.3,220.4 L467.1,219.4 L468.1,218.4 L469.1,217.5 L470.1,216.9 L471.1,216.4 L472.1,216.0 L473.1,215.7 L474.1,215.6 L475.2,215.5 L476.2,215.6 L477.2,215.7 L478.2,216.0 L479.2,216.3 L480.2,216.8 L481.2,217.3 L482.2,217.9 L483.2,218.6 L484.2,219.4 L485.2,220.4 L486.2,221.4 L487.0,222.4 L487.8,223.4 L488.5,224.4 L489.2,225.4 L489.8,226.4 L490.4,227.4 L490.9,228.4 L491.4,229.4 L491.9,230.4 L492.4,231.4 L492.8,232.5 L493.2,233.5 L493.6,234.5 L493.9,235.5 L494.2,236.5 L494.6,237.5 L494.9,238.6 L495.1,239.6 L495.4,240.6 L495.7,241.6 L495.9,242.7 L496.1,243.7 L496.4,244.7 L496.6,245.8 L496.8,246.8 L497.0,247.8 L497.1,248.9 L497.3,249.9 L497.5,250.9 L497.6,251.9 L497.7,253.0 L497.9,254.0 L498.0,255.0 L498.1,256.1 L498.2,257.1 L498.4,258.2 L498.5,259.2 L498.6,260.3 L498.7,261.4 L498.8,262.4 L498.8,263.5 L498.9,264.6 L499.0,265.7 L499.1,266.8 L499.2,267.9 L499.2,268.9 L499.3,269.9 L499.3,271.1 L499.4,272.3 L499.5,273.3 L499.5,274.4 L499.6,275.6 L499.6,276.8 L499.7,277.9 L499.7,279.0 L499.7,280.2 L499.8,281.5 L499.8,282.5 L499.8,283.5 L499.9,284.6 L499.9,285.8 L499.9,287.1 L500.0,288.4 L500.0,289.8 L500.0,290.8 L500.0,291.9 L500.1,293.1 L500.1,294.3 L500.1,295.5 L500.1,296.0 L500.7,295.7 L500.8,294.4 L500.8,293.2 L500.8,292.1 L500.8,291.0 L500.8,290.0 L500.9,288.5 L500.9,287.2 L500.9,285.9 L501.0,284.8 L501.0,283.6 L501.0,282.6 L501.1,281.3 L501.1,280.0 L501.2,278.9 L501.2,277.8 L501.2,276.7 L501.3,275.5 L501.3,274.3 L501.4,273.2 L501.4,272.2 L501.5,271.0 L501.6,269.9 L501.6,268.9 L501.7,267.7 L501.8,266.6 L501.9,265.6 L501.9,264.5 L502.0,263.4 L502.1,262.4 L502.2,261.3 L502.3,260.3 L502.4,259.2 L502.5,258.2 L502.6,257.2 L502.7,256.2 L502.9,255.1 L503.0,254.1 L503.1,253.1 L503.3,252.0 L503.4,251.0 L503.6,249.9 L503.8,248.9 L504.0,247.9 L504.1,246.9 L504.3,245.9 L504.6,244.9 L504.8,243.8 L505.0,242.8 L505.3,241.8 L505.5,240.8 L505.8,239.8 L506.1,238.8 L506.4,237.7 L506.8,236.7 L507.1,235.7 L507.5,234.7 L507.9,233.7 L508.3,232.7 L508.8,231.7 L509.3,230.6 L509.8,229.6 L510.3,228.6 L510.9,227.6 L511.6,226.6 L512.2,225.6 L513.0,224.6 L513.8,223.6 L514.7,222.6 L515.7,221.6 L516.7,220.7 L517.7,219.9 L518.7,219.1 L519.7,218.5 L520.7,217.9 L521.7,217.4 L522.7,217.0 L523.7,216.6 L524.8,216.3 L525.8,216.1 L526.8,215.9 L527.8,215.8 L528.8,215.7 L529.8,215.6 L530.8,215.7 L531.8,215.7 L532.8,215.8 L533.8,216.0 L534.8,216.2 L535.8,216.5 L536.8,216.8 L537.8,217.2 L538.8,217.7 L539.8,218.2 L540.8,218.7 L541.8,219.4 L542.8,220.1 L543.8,220.8 L544.8,221.7 L545.8,222.6 L546.8,223.7 L547.7,224.7 L548.5,225.7 L549.3,226.7 L550.0,227.7 L550.6,228.7 L551.2,229.7 L551.8,230.7 L552.3,231.7 L552.8,232.7 L553.3,233.7 L553.8,234.7 L554.2,235.7 L554.6,236.7 L555.0,237.7 L555.3,238.8 L555.7,239.8 L556.0,240.8 L556.3,241.8 L556.6,242.8 L556.8,243.8 L557.1,244.9 L557.3,245.9 L557.6,246.9 L557.8,247.9 L558.0,248.9 L558.2,250.0 L558.4,251.0 L558.6,252.0 L558.7,253.0 L558.9,254.1 L559.1,255.1 L559.2,256.2 L559.3,257.2 L559.5,258.3 L559.6,259.3 L559.7,260.3 L559.8,261.4 L559.9,262.4 L560.0,263.5 L560.1,264.5 L560.2,265.6 L560.3,266.6 L560.4,267.7 L560.5,268.8 L560.5,269.9 L560.6,271.0 L560.7,272.1 L560.8,273.2 L560.8,274.3 L560.9,275.5 L560.9,276.5 L561.0,277.6 L561.0,278.8 L561.1,280.0 L561.1,281.1 L561.2,282.2 L561.2,283.4 L561.3,284.6 L561.3,286.0 L561.3,287.0 L561.4,288.1 L561.4,289.3 L561.4,290.6 L561.5,291.9 L561.5,293.4 L561.5,294.4 L561.5,295.5 L561.5,296.0 L562.3,295.6 L562.3,294.5 L562.3,293.5 L562.3,292.0 L562.4,290.7 L562.4,289.4 L562.4,288.2 L562.5,287.1 L562.5,286.0 L562.5,285.0 L562.6,283.7 L562.6,282.5 L562.7,281.4 L562.7,280.4 L562.7,279.3 L562.8,278.1 L562.8,277.0 L562.9,276.0 L563.0,274.9 L563.0,273.8 L563.1,272.7 L563.1,271.7 L563.2,270.5 L563.3,269.5 L563.4,268.4 L563.4,267.3 L563.5,266.3 L563.6,265.2 L563.7,264.1 L563.8,263.0 L563.9,262.0 L564.0,260.9 L564.2,259.8 L564.3,258.8 L564.4,257.8 L564.5,256.7 L564.7,255.7 L564.8,254.7 L565.0,253.6 L565.2,252.6 L565.3,251.5 L565.5,250.5 L565.7,249.5 L565.9,248.4 L566.2,247.4 L566.4,246.4 L566.6,245.3 L566.9,244.3 L567.1,243.3 L567.4,242.3 L567.7,241.3 L568.0,240.2 L568.4,239.2 L568.7,238.2 L569.1,237.2 L569.5,236.2 L569.9,235.2 L570.4,234.1 L570.9,233.1 L571.4,232.1 L571.9,231.1 L572.5,230.1 L573.1,229.1 L573.7,228.1 L574.4,227.1 L575.2,226.1 L576.0,225.1 L576.9,224.1 L577.9,223.1 L578.9,222.1 L579.9,221.3 L580.9,220.5 L581.9,219.8 L582.9,219.1 L583.9,218.6 L584.9,218.0 L585.9,217.6 L586.9,217.2 L587.9,216.8 L588.9,216.5 L589.9,216.3 L590.9,216.0 L591.9,215.9 L592.9,215.8 L593.9,215.7 L594.9,215.6 L595.9,215.7 L596.9,215.7 L597.9,215.8 L598.9,215.9 L600.0,216.1 L601.0,216.3 L602.0,216.6 L603.0,216.9 L604.0,217.3 L605.0,217.7 L606.0,218.2 L607.0,218.7 L608.0,219.3 L609.0,220.0 L610.0,220.7 L611.0,221.5 L612.0,222.3 L613.0,223.3 L614.0,224.3 L614.9,225.3 L615.7,226.3 L616.5,227.3 L617.2,228.3 L617.9,229.3 L618.5,230.3 L619.1,231.3 L619.6,232.3 L620.1,233.3 L620.6,234.3 L621.1,235.3 L621.5,236.3 L621.9,237.4 L622.3,238.4 L622.7,239.4 L623.0,240.4 L623.3,241.4 L623.6,242.5 L623.9,243.5 L624.2,244.5 L624.5,245.5 L624.7,246.6 L625.0,247.6 L625.2,248.6 L625.4,249.6 L625.6,250.6 L625.8,251.6 L626.0,252.6 L626.1,253.7 L626.3,254.7 L626.5,255.8 L626.6,256.8 L626.8,257.9 L626.9,258.9 L627.0,260.0 L627.1,261.0 L627.3,262.1 L627.4,263.1 L627.5,264.2 L627.6,265.2 L627.7,266.2 L627.8,267.3 L627.8,268.4 L627.9,269.5 L628.0,270.5 L628.1,271.6 L628.1,272.8 L628.2,273.8 L628.3,274.9 L628.3,276.1 L628.4,277.1 L628.4,278.2 L628.5,279.3 L628.5,280.5 L628.6,281.5 L628.6,282.6 L628.7,283.7 L628.7,284.9 L628.7,286.2 L628.8,287.3 L628.8,288.3 L628.8,289.5 L628.9,290.7 L628.9,292.0 L628.9,293.4 L629.0,294.8 L629.0,295.9 L629.0,296.0 L629.8,295.5 L629.8,294.5 L629.8,293.0 L629.8,291.7 L629.9,290.4 L629.9,289.2 L629.9,288.1 L630.0,287.0 L630.0,286.0 L630.0,284.7 L630.1,283.5 L630.1,282.4 L630.2,281.3 L630.2,280.3 L630.3,279.1 L630.3,278.0 L630.4,276.9 L630.4,275.9 L630.5,274.8 L630.5,273.7 L630.6,272.7 L630.7,271.5 L630.8,270.4 L630.8,269.4 L630.9,268.3 L631.0,267.3 L631.1,266.2 L631.2,265.1 L631.3,264.1 L631.4,263.0 L631.5,262.0 L631.6,261.0 L631.7,259.9 L631.9,258.9 L632.0,257.8 L632.1,256.8 L632.3,255.7 L632.4,254.7 L632.6,253.7 L632.8,252.6 L633.0,251.6 L633.2,250.6 L633.4,249.6 L633.6,248.6 L633.8,247.5 L634.0,246.5 L634.3,245.5 L634.6,244.4 L634.8,243.4 L635.1,242.4 L635.4,241.4 L635.8,240.4 L636.1,239.4 L636.5,238.3 L636.9,237.3 L637.3,236.3 L637.7,235.3 L638.2,234.3 L638.7,233.3 L639.2,232.3 L639.7,231.3 L640.3,230.3 L641.0,229.3 L641.6,228.3 L642.3,227.2 L643.1,226.2 L644.0,225.2 L644.9,224.2 L645.9,223.2 L646.9,222.3 L647.9,221.5 L648.9,220.7 L649.9,220.0 L650.9,219.4 L651.9,218.8 L652.9,218.3 L653.9,217.8 L654.9,217.4 L655.9,217.0 L656.9,216.7 L657.9,216.4 L658.9,216.2 L659.9,216.0 L660.9,215.8 L661.9,215.7 L662.9,215.7 L663.9,215.7 L664.9,215.7 L665.9,215.7 L666.9,215.8 L668.0,216.0 L669.0,216.2 L670.0,216.4 L671.0,216.7 L672.0,217.0 L673.0,217.4 L674.0,217.8 L675.0,218.2 L676.0,218.8 L677.0,219.3 L678.0,220.0 L679.0,220.7 L680.0,221.4 L681.0,222.3 L682.0,223.2 L683.0,224.2 L683.9,225.2 L684.8,226.2 L685.6,227.2 L686.3,228.2 L687.0,229.2 L687.6,230.2 L688.2,231.2 L688.8,232.2 L689.3,233.3 L689.8,234.3 L690.3,235.3 L690.7,236.3 L691.1,237.3 L691.5,238.3 L691.9,239.3 L692.2,240.3 L692.6,241.4 L692.9,242.4 L693.2,243.4 L693.5,244.4 L693.7,245.4 L694.0,246.4 L694.2,247.5 L694.4,248.5 L694.7,249.5 L694.9,250.6 L695.1,251.6 L695.3,252.7 L695.4,253.7 L695.6,254.8 L695.8,255.8 L695.9,256.8 L696.1,257.9 L696.2,258.9 L696.3,259.9 L696.4,261.0 L696.6,262.0 L696.7,263.1 L696.8,264.1 L696.9,265.3 L697.0,266.3 L697.1,267.4 L697.2,268.5 L697.2,269.6 L697.3,270.6 L697.4,271.6 L697.5,272.8 L697.5,273.8 L697.6,274.9 L697.6,276.0 L697.7,277.0 L697.8,278.1 L697.8,279.2 L697.9,280.4 L697.9,281.4 L697.9,282.5 L698.0,283.6 L698.0,284.8 L698.1,286.0 L698.1,287.0 L698.1,288.1 L698.2,289.2 L698.2,290.4 L698.2,291.6 L698.3,293.0 L698.3,294.4 L698.3,295.4 L698.3,296.0 L698.7,296.0" fill="none" stroke="#0B0B8E" stroke-width="1.05"/><rect x="280.5" y="127.5" width="418" height="169" fill="none" stroke="#5A5A5A" stroke-width="1" shape-rendering="crispEdges"/></svg>
<div class="t" style="left:269.92px;top:130.72px;font-size:11px;line-height:11px;color:#404040;transform:scaleX(0.9009);transform-origin:0 0;-webkit-text-stroke:0">0</div>
<div class="t" style="left:258.97px;top:176.40px;font-size:11px;line-height:11px;color:#404040;transform:scaleX(1.0364);transform-origin:0 0;-webkit-text-stroke:0">-20</div>
<div class="t" style="left:258.97px;top:222.07px;font-size:11px;line-height:11px;color:#404040;transform:scaleX(1.0364);transform-origin:0 0;-webkit-text-stroke:0">-40</div>
<div class="t" style="left:258.97px;top:267.75px;font-size:11px;line-height:11px;color:#404040;transform:scaleX(1.0364);transform-origin:0 0;-webkit-text-stroke:0">-60</div>
<div class="t" style="left:276.15px;top:301.69px;font-size:11px;line-height:11px;color:#404040;transform:scaleX(1.0184);transform-origin:0 0;-webkit-text-stroke:0">0</div>
<div class="t" style="left:341.47px;top:301.69px;font-size:11px;line-height:11px;color:#404040;transform:scaleX(0.9689);transform-origin:0 0;-webkit-text-stroke:0">20</div>
<div class="t" style="left:409.84px;top:301.69px;font-size:11px;line-height:11px;color:#404040;transform:scaleX(0.9454);transform-origin:0 0;-webkit-text-stroke:0">40</div>
<div class="t" style="left:477.64px;top:301.69px;font-size:11px;line-height:11px;color:#404040;transform:scaleX(0.9713);transform-origin:0 0;-webkit-text-stroke:0">60</div>
<div class="t" style="left:545.79px;top:301.69px;font-size:11px;line-height:11px;color:#404040;transform:scaleX(0.9672);transform-origin:0 0;-webkit-text-stroke:0">80</div>
<div class="t" style="left:610.84px;top:301.69px;font-size:11px;line-height:11px;color:#404040;transform:scaleX(0.9429);transform-origin:0 0;-webkit-text-stroke:0">100</div>
<div class="t" style="left:678.94px;top:301.69px;font-size:11px;line-height:11px;color:#404040;transform:scaleX(0.9429);transform-origin:0 0;-webkit-text-stroke:0">120</div>
<div class="t" style="left:444.60px;top:315.89px;font-size:11px;line-height:11px;color:#000;transform:scaleX(1.0092);transform-origin:0 0;">Frequency (MHz)</div>
<div class="t" style="left:246.7px;top:212.5px;font-size:11px;line-height:11px;color:#000;transform:translate(-50%,-50%) rotate(-90deg);transform-origin:50% 50%;">Magnitude (dB)</div>
<svg style="position:absolute;left:7px;top:54px" width="16" height="16" viewBox="0 0 16 16" shape-rendering="crispEdges"><path d="M2.5,2.5 H9.5 L12.5,5.5 V14.5 H2.5 Z" fill="#fff" stroke="#000"/><path d="M9.5,2.5 V5.5 H12.5" fill="none" stroke="#000"/></svg>
<svg style="position:absolute;left:30px;top:54px" width="16" height="16" viewBox="0 0 16 16" shape-rendering="crispEdges"><path d="M0.5,6.5 H3.5 L4.5,5.5 H7.5 V7.5 H10.5 V14.5 H0.5 Z" fill="#F4F48A" stroke="#000"/><path d="M0.5,14.5 L4.5,9.5 H15.5 L11.5,14.5 Z" fill="#7F7F3A" stroke="#000"/><path d="M7.5,3.5 Q10,0.5 13.2,2.8" fill="none" stroke="#000" stroke-width="1.1" shape-rendering="auto"/><path d="M11.5,3.5 H15.5 L13.5,6 Z" fill="#000" shape-rendering="auto"/></svg>
<svg style="position:absolute;left:53px;top:54px" width="16" height="16" viewBox="0 0 16 16" shape-rendering="crispEdges"><rect x="1.5" y="2.5" width="13" height="13" fill="#6E6E36" stroke="#000"/><rect x="3" y="3" width="9" height="6" fill="#EEEEDD"/><rect x="4" y="11" width="9" height="4" fill="#111"/><rect x="9" y="12" width="2" height="2" fill="#fff"/></svg>
<svg style="position:absolute;left:76px;top:54px" width="16" height="16" viewBox="0 0 16 16" shape-rendering="crispEdges"><path d="M5.5,2.5 H12.5 L11.5,6.5 H4.5 Z" fill="#fff" stroke="#000" shape-rendering="auto"/><path d="M6.5,4 H11 M6,5.3 H10.5" stroke="#000" stroke-width="0.8" shape-rendering="auto"/><rect x="0.5" y="6.5" width="15" height="8" rx="2.5" fill="#F4F4EE" stroke="#000" shape-rendering="auto"/><path d="M1,9.5 H15 M1,12.5 H15" stroke="#000" stroke-width="1"/><rect x="2" y="10" width="11" height="2" fill="#E4E4B0"/><circle cx="14" cy="8" r="0.8" fill="#000"/><circle cx="14" cy="11" r="0.8" fill="#000"/></svg>
<svg style="position:absolute;left:99px;top:54px" width="16" height="16" viewBox="0 0 16 16" shape-rendering="crispEdges"><path d="M0.5,2.5 H7.5 L10.5,5.5 V14.5 H0.5 Z" fill="#fff" stroke="#000"/><circle cx="10" cy="10" r="3.5" fill="#A8B4BC" stroke="#000" shape-rendering="auto"/><path d="M12,12.5 L15,15.5" stroke="#000" stroke-width="2" shape-rendering="auto"/></svg>
<svg style="position:absolute;left:130px;top:54px" width="16" height="16" viewBox="0 0 16 16" shape-rendering="crispEdges"><path d="M1.5,14.5 L6,10" stroke="#000" stroke-width="2.4" shape-rendering="auto"/><circle cx="10" cy="6" r="5" fill="#fff" stroke="#000" stroke-width="1.4" shape-rendering="auto"/><path d="M7,6 H13 M10,3 V9" stroke="#000" stroke-width="2"/></svg>
<svg style="position:absolute;left:153px;top:54px" width="16" height="16" viewBox="0 0 16 16" shape-rendering="crispEdges"><path d="M1.5,14.5 L6,10" stroke="#000" stroke-width="2.4" shape-rendering="auto"/><circle cx="10" cy="6" r="5" fill="#fff" stroke="#000" stroke-width="1.4" shape-rendering="auto"/><path d="M7.5,3.5 L12.5,8.5 M12.5,3.5 L7.5,8.5" stroke="#000" stroke-width="1" shape-rendering="auto"/></svg>
<svg style="position:absolute;left:176px;top:54px" width="16" height="16" viewBox="0 0 16 16" shape-rendering="crispEdges"><path d="M1.5,14.5 L6,10" stroke="#000" stroke-width="2.4" shape-rendering="auto"/><circle cx="10" cy="6" r="5" fill="#fff" stroke="#000" stroke-width="1.4" shape-rendering="auto"/><path d="M10,6 V11 M10,6 L6.5,3 M10,6 L13.5,3" stroke="#000" stroke-width="1" shape-rendering="auto"/></svg>
<svg style="position:absolute;left:199px;top:54px" width="16" height="16" viewBox="0 0 16 16" shape-rendering="crispEdges"><path d="M2,2 L14,14 M14,2 L2,14" stroke="#000" stroke-width="1.3" shape-rendering="auto"/><path d="M1.5,5 V1.5 H5 M11,1.5 H14.5 V5 M14.5,11 V14.5 H11 M5,14.5 H1.5 V11" fill="none" stroke="#000" stroke-width="1.5"/></svg>
<svg style="position:absolute;left:230px;top:54px" width="16" height="16" viewBox="0 0 16 16" shape-rendering="crispEdges"><path d="M0.5,1.5 H8.5 V3.5 H11.5 V4.5 H14.5 V15.5 H3.5 V13.5 H1.5 V11.5 H0.5 Z" fill="#fff" stroke="#000" stroke-dasharray="2,1"/><rect x="3.5" y="4.5" width="11" height="11" fill="#F4F4F4" stroke="#000"/></svg>
<svg style="position:absolute;left:261px;top:54px" width="16" height="16" viewBox="0 0 16 16" shape-rendering="crispEdges"><rect x="0.5" y="0.5" width="15" height="15" fill="#E4E4EC" stroke="#000" stroke-width="1.3"/><rect x="1.5" y="7" width="4" height="8" fill="#B4B4B4" stroke="#333" stroke-width="0.8"/><path d="M1,4.5 H6.5 L8.5,9 L10,13.5 H15" fill="none" stroke="#1A1A9A" stroke-width="1.3" shape-rendering="auto"/><rect x="1" y="4" width="6" height="2" fill="#1A1A9A"/><path d="M6.5,1 V4 M10.5,10 V12.5 H14" fill="none" stroke="#333" stroke-width="0.9"/></svg>
<div style="position:absolute;left:289px;top:51px;width:23px;height:23px;border:1px solid #A0AAC0;border-radius:3px;background:#F6F6F2;box-shadow:inset 0 0 0 1px #fff"></div>
<svg style="position:absolute;left:292px;top:54px" width="16" height="16" viewBox="0 0 16 16" shape-rendering="crispEdges"><rect x="0.5" y="0.5" width="15" height="15" fill="#E8E6F2" stroke="#000" stroke-width="1.2"/><path d="M1,5 H5.5 L9,14 H15 V15 H1 Z" fill="#FFF200"/><path d="M1,5.5 H5.5 L9,14.5 H15" fill="none" stroke="#1A1AA0" stroke-width="1.3" shape-rendering="auto"/><rect x="9" y="14" width="6.5" height="1.5" fill="#1A1AA0"/></svg>
<svg style="position:absolute;left:315px;top:54px" width="16" height="16" viewBox="0 0 16 16" shape-rendering="crispEdges"><rect x="0.5" y="0.5" width="15" height="15" fill="#E8E6F2" stroke="#000" stroke-width="1.2"/><path d="M1,5.5 L7.5,12 V6 L15,13" fill="none" stroke="#1A1AA0" stroke-width="1.2" shape-rendering="auto"/></svg>
<svg style="position:absolute;left:338px;top:54px" width="16" height="16" viewBox="0 0 16 16" shape-rendering="crispEdges"><rect x="0.5" y="0.5" width="15" height="15" fill="#E8E6F2" stroke="#000" stroke-width="1.2"/><path d="M1,5 H3.5 L6.5,11 L8.5,14 H10 V15 H1 Z" fill="#FFF200"/><path d="M1,5.5 H3.5 L6.5,11 L8,14 H10.5" fill="none" stroke="#1A1AA0" stroke-width="1.3" shape-rendering="auto"/><path d="M8,12 L10,9 H15" fill="none" stroke="#1A1AA0" stroke-width="1.1" stroke-dasharray="1.5,1" shape-rendering="auto"/></svg>
<svg style="position:absolute;left:361px;top:54px" width="16" height="16" viewBox="0 0 16 16" shape-rendering="crispEdges"><g fill="none" stroke="#3A14C8" stroke-width="1.2" shape-rendering="auto"><path d="M1,8.5 H15 M1.2,5.5 H3.5 M8,1 V7.2 M12,1 V8"/><ellipse cx="6" cy="5.3" rx="1.8" ry="1.9"/><ellipse cx="12" cy="5" rx="2.3" ry="2"/><path d="M4.5,9.8 V14.5"/><ellipse cx="2.6" cy="12.7" rx="1.7" ry="1.8"/><path d="M6,11 Q5.8,14.6 7.8,14.6 Q9.3,14.6 9.3,12.2 Q9.3,14.6 10.8,14.6 Q12.8,14.6 12.6,11"/></g></svg>
<svg style="position:absolute;left:384px;top:54px" width="16" height="16" viewBox="0 0 16 16" shape-rendering="crispEdges"><g fill="none" stroke="#3A14C8" stroke-width="1.2" shape-rendering="auto"><path d="M1,9.5 H15 M2,5.5 H5 M9.5,1 V8.5"/><ellipse cx="9.5" cy="5.3" rx="2.2" ry="2.1"/><path d="M6,11 Q5.8,14.6 7.8,14.6 Q9.3,14.6 9.3,12.2 Q9.3,14.6 10.8,14.6 Q12.8,14.6 12.6,11"/></g></svg>
<svg style="position:absolute;left:407px;top:54px" width="16" height="16" viewBox="0 0 16 16" shape-rendering="crispEdges"><rect x="0.5" y="0.5" width="15" height="15" fill="#E8E6F2" stroke="#000" stroke-width="1.2"/><path d="M8.5,15 V3.5 M5,7 L8.5,3.5 L12,7" fill="none" stroke="#1A1AA0" stroke-width="1.2" shape-rendering="auto"/></svg>
<svg style="position:absolute;left:430px;top:54px" width="16" height="16" viewBox="0 0 16 16" shape-rendering="crispEdges"><path d="M0,13.5 H5.5 V6.5 H16" fill="none" stroke="#1A1AA0" stroke-width="1.3"/></svg>
<svg style="position:absolute;left:453px;top:54px" width="16" height="16" viewBox="0 0 16 16" shape-rendering="crispEdges"><rect x="0" y="0" width="16" height="16" fill="#8A8A8A"/><circle cx="8" cy="8" r="7.3" fill="#F4F4FA" stroke="#3010C0" stroke-width="1.2" shape-rendering="auto"/><path d="M8.5,0.5 V15.5 M0.5,8.5 H15.5" stroke="#3010C0" stroke-width="1"/><path d="M10.3,4.3 l2,2 m0,-2 l-2,2 M10.3,10.3 l2,2 m0,-2 l-2,2" stroke="#3010C0" stroke-width="0.9" shape-rendering="auto"/><circle cx="5" cy="5.3" r="1" fill="none" stroke="#3010C0" stroke-width="0.9" shape-rendering="auto"/><circle cx="5" cy="11.3" r="1" fill="none" stroke="#3010C0" stroke-width="0.9" shape-rendering="auto"/></svg>
<svg style="position:absolute;left:476px;top:54px" width="16" height="16" viewBox="0 0 16 16" shape-rendering="crispEdges"><path d="M3.5,0.5 H1.5 V15.5 H3.5 M13,0.5 H15.5 V15.5 H13" fill="none" stroke="#3010C0" stroke-width="1.1"/><g fill="none" stroke="#3010C0" stroke-width="1.05" shape-rendering="auto"><path d="M3.5,4 V12.5 M3.5,10 Q3.5,7.6 5.2,7.6 Q7,7.6 7,10 Q7,12.5 5.2,12.5 Q3.5,12.5 3.5,10.5"/><path d="M7.5,13.5 L8.3,11.8"/><path d="M12.5,8.2 V12.8 M12.5,10 Q12.5,7.6 10.8,7.6 Q9,7.6 9,10.1 Q9,12.5 10.8,12.5 Q12.5,12.5 12.5,10.3"/></g></svg>
<svg style="position:absolute;left:499px;top:54px" width="16" height="16" viewBox="0 0 16 16" shape-rendering="crispEdges"><circle cx="8" cy="8.5" r="7.5" fill="#0000E0" shape-rendering="auto"/><rect x="6.6" y="3" width="2.8" height="2.5" fill="#fff"/><path d="M5.5,7 H9.2 V12.5 H10.5 V13.8 H5.5 V12.5 H6.8 V8.3 H5.5 Z" fill="#fff"/></svg>
<svg style="position:absolute;left:522px;top:54px" width="16" height="16" viewBox="0 0 16 16" shape-rendering="crispEdges"><rect x="0.5" y="0.5" width="15" height="15" fill="#E8E6F2" stroke="#000" stroke-width="1.2"/><path d="M1,4 H5.5 L8.5,7.5 L10.5,11.5 L12,13 H15" fill="none" stroke="#108A10" stroke-width="1" shape-rendering="auto"/><path d="M1,5.5 H4.5 L7,9 L9,13 L10.5,14.5 H15" fill="none" stroke="#1A1AA0" stroke-width="1.4" shape-rendering="auto"/></svg>
<svg style="position:absolute;left:545px;top:54px" width="16" height="16" viewBox="0 0 16 16" shape-rendering="crispEdges"><rect x="0.5" y="0.5" width="15" height="15" fill="#E8E6F2" stroke="#000" stroke-width="1.2"/><path d="M1.5,9.5 H3.5 V10.5 H5.5 V9.5 H7.5 V6.5 H9.5 V5.5 H11.5 V6.5 H13.5 V4.5 H15" fill="none" stroke="#18A018" stroke-width="1"/></svg>
<svg style="position:absolute;left:576px;top:54px" width="16" height="16" viewBox="0 0 16 16" shape-rendering="crispEdges"><path d="M1,1 V13 L3.8,10.3 L6,15 L8,14 L6,9.5 L9.5,9.2 Z" fill="#000"/><path d="M9,4 Q9,1.2 12,1.2 Q15,1.2 15,4 Q15,6 13,7 Q12.5,7.5 12.5,10" fill="none" stroke="#1A1A80" stroke-width="2.2" shape-rendering="auto"/><rect x="11.2" y="12" width="2.6" height="2.6" fill="#1A1A80"/></svg>
<svg style="position:absolute;left:6px;top:8px" width="16" height="16" viewBox="0 0 16 16" shape-rendering="crispEdges"><rect x="0" y="0" width="16" height="16" fill="#0A0A0A"/><path d="M1,10 L5,8 L8,11 L4,12 Z" fill="#3FA8C8" shape-rendering="auto"/><path d="M4,12 L9,5 L11,1 L12,6 L15,12 L11,10 L8,14 Z" fill="#E07A20" shape-rendering="auto"/><path d="M9,5 L11,1 L12,6 L10,9 Z" fill="#F8C060" shape-rendering="auto"/></svg>
<div style="position:absolute;left:705px;top:6px;width:21px;height:21px;border:1px solid #fff;border-radius:3px;background:radial-gradient(circle at 30% 25%,#7AA4F8 0%,#3A72EE 35%,#245EE0 70%,#1C4FD0 100%)"></div>
<svg style="position:absolute;left:705px;top:6px" width="21" height="21"><rect x="6" y="13" width="7" height="3" fill="#fff"/></svg>
<div style="position:absolute;left:728px;top:6px;width:21px;height:21px;border:1px solid #fff;border-radius:3px;background:radial-gradient(circle at 30% 25%,#7AA4F8 0%,#3A72EE 35%,#245EE0 70%,#1C4FD0 100%)"></div>
<svg style="position:absolute;left:728px;top:6px" width="21" height="21"><rect x="5.5" y="5.5" width="10" height="10" fill="none" stroke="#fff" stroke-width="1"/><rect x="5" y="5" width="11" height="3" fill="#fff"/></svg>
<div style="position:absolute;left:751px;top:6px;width:21px;height:21px;border:1px solid #fff;border-radius:3px;background:radial-gradient(circle at 30% 25%,#F0A890 0%,#E06A48 40%,#D44A28 80%,#C03A18 100%)"></div>
<svg style="position:absolute;left:751px;top:6px" width="21" height="21"><path d="M6,6 L15,15 M15,6 L6,15" stroke="#fff" stroke-width="1.8"/></svg>
<div style="position:absolute;left:4px;top:393px;width:28px;height:27px;border:1px solid #4E5E7A;border-radius:4px;background:linear-gradient(to bottom,#F6F5F0,#E8E5DA);box-shadow:inset 1px 1px 0 #fff"></div>
<svg style="position:absolute;left:4px;top:393px" width="28" height="27" viewBox="0 0 28 27" shape-rendering="crispEdges"><path d="M1,7.5 H3 M12,7.5 H14 M23,7.5 H25.5 M1,18.5 H3 M12,18.5 H14 M23,18.5 H25.5" stroke="#1A2070" stroke-width="1.1"/><path d="M4.5,7 H7 L10.5,10.5 H4.5 Z M15.5,18 H18 L21.5,21.5 H15.5 Z" fill="#F4EC70" shape-rendering="auto"/><g fill="none" stroke="#1A2070" stroke-width="1.5" shape-rendering="auto"><rect x="3.75" y="3.75" width="7.5" height="7.5"/><rect x="14.75" y="3.75" width="7.5" height="7.5"/><rect x="3.75" y="14.75" width="7.5" height="7.5"/><rect x="14.75" y="14.75" width="7.5" height="7.5"/></g><path d="M4.5,6.5 H7 L10.5,10 M15.5,17.5 H18 L21.5,21" fill="none" stroke="#1A2070" stroke-width="0.9" shape-rendering="auto"/><path d="M18.5,5 V9.5 M16.8,7.8 L18.5,9.6 L20.2,7.8 M7.5,21 V16.5 M5.8,18.2 L7.5,16.4 L9.2,18.2" fill="none" stroke="#1A2070" stroke-width="1" shape-rendering="auto"/></svg>
<div style="position:absolute;left:4px;top:423px;width:28px;height:27px;border:1px solid #4E5E7A;border-radius:4px;background:linear-gradient(to bottom,#F6F5F0,#E8E5DA);box-shadow:inset 1px 1px 0 #fff"></div>
<svg style="position:absolute;left:4px;top:423px" width="28" height="27" viewBox="0 0 28 27" shape-rendering="crispEdges"><path d="M6,6.5 H17" stroke="#1A1A80" stroke-width="1.4"/><path d="M16,3.5 L20,6.5 L16,9.5 Z" fill="#1A1A80" shape-rendering="auto"/><rect x="1.5" y="10.5" width="10" height="9" fill="#F2E830" stroke="#111" stroke-width="1.4"/><rect x="14.5" y="10.5" width="10" height="9" fill="#F2E830" stroke="#111" stroke-width="1.4"/><path d="M2.5,11.5 H6 V13.5 L8,15.5 H10.7 V11.5 Z M15.3,11.5 V15.5 H18 L20,13.5 V11.5 Z" fill="#fff"/><path d="M2.5,13.5 H6 L8,15.5 H11 M15,15.5 H18 L20,13.5 H24" fill="none" stroke="#111" stroke-width="1"/></svg>
<div style="position:absolute;left:4px;top:453px;width:28px;height:27px;border:1px solid #4E5E7A;border-radius:4px;background:linear-gradient(to bottom,#F6F5F0,#E8E5DA);box-shadow:inset 1px 1px 0 #fff"></div>
<svg style="position:absolute;left:4px;top:453px" width="28" height="27" viewBox="0 0 28 27" shape-rendering="crispEdges"><rect x="6.5" y="6.5" width="18" height="17.5" fill="#fff" stroke="#1A1A40" stroke-width="1.4"/><path d="M15.5,8.5 V22 M8.5,15.5 H22.5" stroke="#222" stroke-width="1"/><path d="M13.5,10.5 L15.5,8.5 L17.5,10.5 M20.5,13.5 L22.5,15.5 L20.5,17.5" fill="none" stroke="#222" stroke-width="1" shape-rendering="auto"/><path d="M9,21.5 H11.5 V18.5 H13.5 V15.5 H17.5 V12.5 H19.5 V9.5 H22" fill="none" stroke="#5020C8" stroke-width="1.1"/><path d="M1.2,3.2 L3.2,1.2 L10,8 L10.8,10.8 L8,10 Z" fill="#E8C070" stroke="#5A4020" stroke-width="0.8" stroke-linejoin="round" shape-rendering="auto"/><path d="M1.2,3.2 L3.2,1.2 L4.4,2.4 L2.4,4.4 Z" fill="#D87070" shape-rendering="auto"/></svg>
<div style="position:absolute;left:4px;top:483px;width:28px;height:27px;border:1px solid #4E5E7A;border-radius:4px;background:linear-gradient(to bottom,#F6F5F0,#E8E5DA);box-shadow:inset 1px 1px 0 #fff"></div>
<svg style="position:absolute;left:4px;top:483px" width="28" height="27" viewBox="0 0 28 27" shape-rendering="crispEdges"><path d="M2,3 L3,4 M5,1.5 L5.3,3.2 M1.2,6.5 L3,6.8 M3.5,8.5 L2.5,9.5" stroke="#333" stroke-width="0.9" shape-rendering="auto"/><rect x="6.5" y="6" width="18.5" height="18.5" fill="#fff" stroke="#1A1A50" stroke-width="1.4"/><path d="M9.5,9.5 H21.5 M11.5,9.5 V12 M20.5,9.5 V12 M11.5,16 V20.5 H18" fill="none" stroke="#1A1A80" stroke-width="1"/><path d="M8.5,12.5 H14.5 L11.5,16.5 Z M17.5,12.5 H23.5 L20.5,16.5 Z" fill="#fff" stroke="#1A1A80" stroke-width="1" shape-rendering="auto"/><path d="M20.5,16.5 V18.5" stroke="#1A1A80"/><circle cx="20.5" cy="20.5" r="2.2" fill="#F0E050" stroke="#1A1A80" stroke-width="0.9" shape-rendering="auto"/></svg>
<div style="position:absolute;left:4px;top:513px;width:28px;height:27px;border:1px solid #4E5E7A;border-radius:4px;background:linear-gradient(to bottom,#F6F5F0,#E8E5DA);box-shadow:inset 1px 1px 0 #fff"></div>
<svg style="position:absolute;left:4px;top:513px" width="28" height="27" viewBox="0 0 28 27" shape-rendering="crispEdges"><rect x="6.5" y="6.5" width="18.5" height="17.5" fill="#fff" stroke="#1A1A40" stroke-width="1.4"/><circle cx="15.7" cy="15.3" r="6.8" fill="none" stroke="#4020C8" stroke-width="1.1" shape-rendering="auto"/><path d="M15.5,7.5 V23.5 M7.5,15.5 H23.5" stroke="#4020C8" stroke-width="1"/><path d="M17.8,11.2 l1.8,1.8 m0,-1.8 l-1.8,1.8 M17.8,17.8 l1.8,1.8 m0,-1.8 l-1.8,1.8" stroke="#4020C8" stroke-width="0.8" shape-rendering="auto"/><circle cx="12.6" cy="12.2" r="0.9" fill="none" stroke="#4020C8" stroke-width="0.8" shape-rendering="auto"/><circle cx="12.6" cy="18.6" r="0.9" fill="none" stroke="#4020C8" stroke-width="0.8" shape-rendering="auto"/><path d="M1.2,3.2 L3.2,1.2 L10,8 L10.8,10.8 L8,10 Z" fill="#E8C070" stroke="#5A4020" stroke-width="0.8" stroke-linejoin="round" shape-rendering="auto"/><path d="M1.2,3.2 L3.2,1.2 L4.4,2.4 L2.4,4.4 Z" fill="#D87070" shape-rendering="auto"/></svg>
<div style="position:absolute;left:4px;top:543px;width:28px;height:27px;border:1px solid #4E5E7A;border-radius:4px;background:linear-gradient(to bottom,#F6F5F0,#E8E5DA);box-shadow:inset 1px 1px 0 #fff"></div>
<svg style="position:absolute;left:4px;top:543px" width="28" height="27" viewBox="0 0 28 27" shape-rendering="crispEdges"><rect x="4.5" y="3.5" width="20" height="16" fill="#fff" stroke="#333" stroke-width="1"/><rect x="4" y="3" width="21" height="3" fill="#1A1A50"/><path d="M19,4.5 h1 M21,4.5 h1 M23,4.5 h1" stroke="#fff"/><path d="M15,13.5 H22 M19.5,11 L22.5,13.5 L19.5,16" fill="none" stroke="#4020C8" stroke-width="1.2" shape-rendering="auto"/><rect x="2" y="9.5" width="13.5" height="13.5" fill="#fff"/><path d="M3.5,9.5 H1.5 V23.5 H3.5 M14.5,9.5 H16.5 V23.5 H14.5" fill="none" stroke="#4020C8" stroke-width="1"/><path d="M3.5,12 V21 M3.5,18 Q3.5,15.8 5.5,15.8 Q7.5,15.8 7.5,18.4 Q7.5,21 5.5,21 Q3.5,21 3.5,18.6 M8,22.5 L9,20.5 M14,16.3 V21.2 M14,18.4 Q14,15.8 11.8,15.8 Q9.8,15.8 9.8,18.5 Q9.8,21 11.8,21 Q14,21 14,18.7" fill="none" stroke="#4020C8" stroke-width="1" shape-rendering="auto"/></svg>
<div style="position:absolute;left:4px;top:573px;width:28px;height:27px;border:1px solid #4E5E7A;border-radius:4px;background:linear-gradient(to bottom,#F6F5F0,#E8E5DA);box-shadow:inset 1px 1px 0 #fff"></div>
<svg style="position:absolute;left:4px;top:573px" width="28" height="27" viewBox="0 0 28 27" shape-rendering="crispEdges"><rect x="6.5" y="6.5" width="18" height="17.5" fill="#fff" stroke="#1A1A40" stroke-width="1.4"/><rect x="9.5" y="13.5" width="3.5" height="8.5" fill="#C4C4C4" stroke="#333" stroke-width="1"/><rect x="8.5" y="11" width="6" height="1.8" fill="#1A1A8A"/><path d="M14.5,8 V11" stroke="#333"/><path d="M13.5,12 H14.5 L16.5,16 L17.5,19 L19.5,21.5 H23" fill="none" stroke="#3A1AC0" stroke-width="1.2" shape-rendering="auto"/><path d="M18.5,15 V19.5 H22.5" fill="none" stroke="#333" stroke-width="1"/><path d="M1.2,3.2 L3.2,1.2 L10,8 L10.8,10.8 L8,10 Z" fill="#E8C070" stroke="#5A4020" stroke-width="0.8" stroke-linejoin="round" shape-rendering="auto"/><path d="M1.2,3.2 L3.2,1.2 L4.4,2.4 L2.4,4.4 Z" fill="#D87070" shape-rendering="auto"/></svg>
<svg style="position:absolute;left:620px;top:570px" width="158" height="61" viewBox="0 0 158 61">
<defs><filter id="sh" x="-20%" y="-20%" width="140%" height="140%"><feDropShadow dx="0.8" dy="1" stdDeviation="0.6" flood-color="#8A8A8A" flood-opacity="0.9"/></filter></defs>
<g filter="url(#sh)">
<circle cx="28.6" cy="35" r="17.6" fill="#FBFBF8"/><path d="M24,18.5 C31,17.5 35,13 36.6,8.2 C39,14 39.5,19 35.5,23.5 L30,24 Z" fill="#FBFBF8"/>
<g fill="none" stroke="#FBFBF8" stroke-width="2.2" stroke-linecap="round" stroke-linejoin="round" transform="translate(52,17) scale(0.88,0.95) translate(-52,-17)">
<path d="M54,21 H64 V31 H54 Z M54,26 H64 M59,17 V34 Q59,36 62,36 H67"/>
<path d="M72,18 H83 L78,23 M77,23 V35 Q77,37 74,36 M70,27 H86"/>
<path d="M91,22 Q93,20 95,19 M90,24 H105 M100,17 Q101,21 104,22 M96,24 Q94,31 89,36 M95,28 H102 Q99,33 93,36 M97,31 Q101,35 106,36"/>
<path d="M110,22 L111,25 M113,17 V25 Q112,31 109,36 M113,27 L116,31 M117,22 H127 M121,17 Q121,22 119,25 M118,28 H127 M121,28 Q121,33 117,36 M124,28 V35 H128"/>
<path d="M131,22 H146 M138,17 Q137,27 131,36 M135,27 H144 Q141,33 134,36 M137,31 Q142,34 147,36"/>
</g>
</g>
<g fill="none" stroke="#9A9A9A" stroke-width="0.9"><circle cx="17.7" cy="34" r="2.3"/><circle cx="38.3" cy="34" r="2.3"/><path d="M19.5,32.5 L33,22 M36.5,35.5 L23,46"/></g>
</svg>
<div class="t" style="left:672.27px;top:609.33px;font-size:10px;line-height:10px;color:#FAFAF6;font-weight:bold;transform:scaleX(1.0861);transform-origin:0 0;text-shadow:1px 1px 1px #8A8A8A">www.elecfans.com</div>
</body></html>
